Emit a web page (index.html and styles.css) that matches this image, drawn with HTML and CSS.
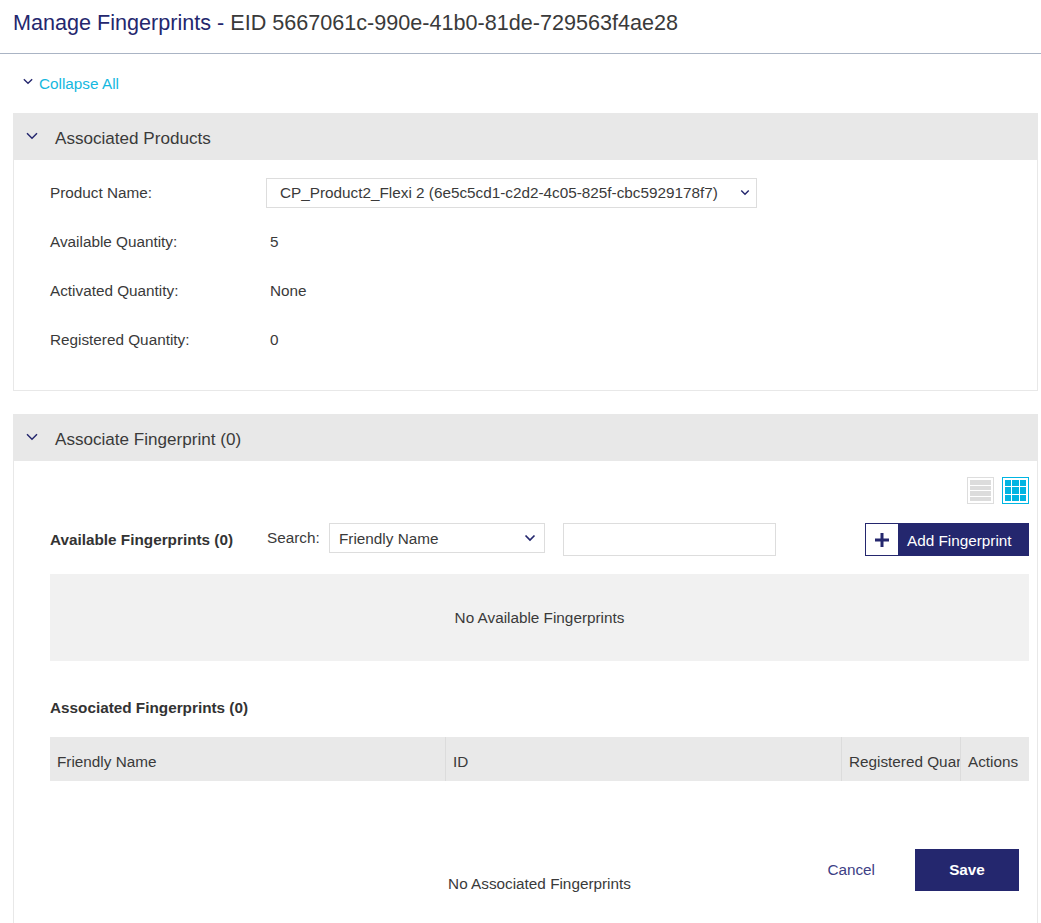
FILE: index.html
```html
<!DOCTYPE html>
<html lang="en">
<head>
<meta charset="utf-8">
<title>Manage Fingerprints</title>
<link rel="stylesheet" href="styles.css">
</head>
<body>
<header class="page-header">
  <h1 class="page-title"><span class="title-accent">Manage Fingerprints -</span> EID 5667061c-990e-41b0-81de-729563f4ae28</h1>
</header>
<main class="content">
  <div class="collapse-all">
    <svg class="chevron" viewBox="0 0 12 8" width="12" height="8"><path d="M1 1.2 6 6.2 11 1.2" fill="none" stroke="#24276e" stroke-width="1.6"/></svg>
    <a class="collapse-link" href="#">Collapse All</a>
  </div>

  <section class="panel panel-products">
    <div class="panel-head">
      <svg class="chevron" viewBox="0 0 12 8" width="12" height="8"><path d="M1 1.2 6 6.2 11 1.2" fill="none" stroke="#24276e" stroke-width="1.5"/></svg>
      <h2 class="panel-title">Associated Products</h2>
    </div>
    <div class="product-grid">
      <div class="product-label">Product Name:</div>
      <div class="product-value">
        <select class="select select-product"><option>CP_Product2_Flexi 2 (6e5c5cd1-c2d2-4c05-825f-cbc5929178f7)</option></select>
      </div>
      <div class="product-label">Available Quantity:</div>
      <div class="product-value product-text">5</div>
      <div class="product-label">Activated Quantity:</div>
      <div class="product-value product-text">None</div>
      <div class="product-label">Registered Quantity:</div>
      <div class="product-value product-text">0</div>
    </div>
  </section>

  <section class="panel panel-fingerprints">
    <div class="panel-head">
      <svg class="chevron" viewBox="0 0 12 8" width="12" height="8"><path d="M1 1.2 6 6.2 11 1.2" fill="none" stroke="#24276e" stroke-width="1.5"/></svg>
      <h2 class="panel-title">Associate Fingerprint (0)</h2>
    </div>
    <div class="panel-body">
      <div class="view-toggle">
        <span class="view-icon view-list"><i></i><i></i><i></i><i></i></span>
        <span class="view-icon view-grid"><i></i><i></i><i></i><i></i><i></i><i></i><i></i><i></i><i></i></span>
      </div>
      <div class="search-row">
        <h3 class="sub-title sub-available">Available Fingerprints (0)</h3>
        <label class="search-label">Search:</label>
        <select class="select select-search"><option>Friendly Name</option></select>
        <input class="search-input" type="text">
        <button class="add-button" type="button">
          <span class="add-icon"><svg viewBox="0 0 16 16" width="16" height="16"><path d="M8 1v14M1 8h14" stroke="#24276e" stroke-width="3"/></svg></span>
          <span class="add-text">Add Fingerprint</span>
        </button>
      </div>
      <div class="empty-box">No Available Fingerprints</div>
      <h3 class="sub-title sub-associated">Associated Fingerprints (0)</h3>
      <div class="table-head">
        <div class="th">Friendly Name</div>
        <div class="th">ID</div>
        <div class="th">Registered Quantity</div>
        <div class="th">Actions</div>
      </div>
      <div class="table-empty">No Associated Fingerprints</div>
    </div>
  </section>
</main>
<footer class="action-bar">
  <a class="cancel-link" href="#">Cancel</a>
  <button class="save-button" type="button">Save</button>
</footer>
</body>
</html>
```
FILE: styles.css
```css
* { box-sizing: border-box; }
html, body { height: 923px; overflow: hidden; }
body {
  margin: 0;
  background: #fff;
  color: #3a3a3a;
  font-family: "Liberation Sans", Arial, sans-serif;
  font-size: 15.3px;
  position: relative;
}
.page-header {
  height: 54px;
  border-bottom: 1px solid #aab4c4;
  padding: 10px 13px 0;
}
.page-title {
  margin: 0;
  font-size: 21.6px;
  line-height: 25px;
  font-weight: 400;
  color: #3a3a3a;
  white-space: nowrap;
}
.title-accent { color: #24276e; }
.content { padding: 0 3px 0 13px; }
.collapse-all {
  display: flex;
  align-items: center;
  height: 59px;
  padding: 0 0 0 10px;
}
.collapse-all .chevron { width: 10px; height: 7px; margin: -4px 6px 0 0; }
.collapse-link { color: #14b8e0; text-decoration: none; padding-top: 1px; }
.panel { border: 1px solid #e8e8e8; border-top: 0; }
.panel-products { height: 278px; margin-bottom: 23px; }
.panel-fingerprints { border-bottom: 0; height: 520px; }
.panel-head {
  display: flex;
  align-items: center;
  height: 47px;
  background: #e8e8e8;
  margin: 0 -1px;
  padding-left: 13px;
}
.panel-head .chevron { margin-right: 17px; margin-top: -1px; }
.panel-title { margin: 0; font-size: 17.1px; line-height: 20px; padding-top: 4px; font-weight: 400; color: #3a3a3a; }
.product-grid {
  display: grid;
  grid-template-columns: 216px 1fr;
  grid-auto-rows: 49px;
  padding: 8px 0 0 36px;
}
.product-label { display: flex; align-items: center; height: 49px; padding-top: 1px; }
.product-value { display: flex; align-items: center; }
.product-text { padding-left: 4px; }
.select {
  appearance: none;
  -webkit-appearance: none;
  height: 30px;
  border: 1px solid #ddd;
  background-color: #fff;
  background-repeat: no-repeat;
  background-image: url("data:image/svg+xml,%3Csvg xmlns='http://www.w3.org/2000/svg' width='12' height='8' viewBox='0 0 12 8'%3E%3Cpath d='M1.5 1.5 6 6 10.500 1.500' fill='none' stroke='%2324276e' stroke-width='1.700'/%3E%3C/svg%3E");
  color: #3a3a3a;
  font-family: "Liberation Sans", Arial, sans-serif;
  font-size: 15.3px;
  border-radius: 0;
}
.select-product { width: 491px; padding-left: 13px; background-position: 473px 10px; background-size: 10px 7px; }
.panel-body { padding: 16px 8px 0 36px; }
.view-toggle { display: flex; justify-content: flex-end; gap: 8px; height: 28px; }
.view-icon {
  width: 27px;
  height: 27px;
  padding: 2px;
  display: grid;
  gap: 1px;
  background: #fff;
}
.view-list { border: 1px solid #ddd; grid-template-rows: repeat(4, 1fr); }
.view-list i { background: #dcdcdc; }
.view-grid { border: 1px solid #00b5e2; grid-template-columns: repeat(3, 1fr); grid-template-rows: repeat(3, 1fr); }
.view-grid i { background: #00b5e2; }
.search-row { display: flex; align-items: flex-start; height: 51px; margin-top: 18px; }
.sub-title { margin: 0; font-size: 15.3px; font-weight: 700; color: #333; }
.sub-available { width: 217px; padding-top: 8px; white-space: nowrap; }
.search-label { width: 62px; padding-top: 6px; }
.select-search { width: 216px; padding-left: 9px; background-position: 194px 10px; }
.search-input { width: 213px; height: 33px; margin-left: 18px; border: 1px solid #ddd; background: #fff; }
.add-button {
  display: flex;
  align-items: stretch;
  width: 164px;
  height: 33px;
  margin-left: auto;
  padding: 0;
  border: 1px solid #24276e;
  background: #24276e;
  color: #fff;
  font-family: "Liberation Sans", Arial, sans-serif;
  font-size: 15.3px;
}
.add-icon {
  display: flex;
  align-items: center;
  justify-content: center;
  width: 32px;
  background: #fff;
}
.add-text { align-self: center; padding: 2px 0 0 9px; white-space: nowrap; }
.empty-box {
  display: flex;
  align-items: center;
  justify-content: center;
  height: 87px;
  background: #f1f1f1;
}
.sub-associated { margin-top: 38px; line-height: 18px; }
.table-head {
  display: grid;
  grid-template-columns: 396px 396px 119px 68px;
  height: 44px;
  margin-top: 20px;
  background: #e9e9e9;
}
.th {
  display: flex;
  align-items: center;
  padding: 5px 0 0 7px;
  overflow: hidden;
  white-space: nowrap;
  border-right: 1px solid #dcdcdc;
}
.th:last-child { border-right: 0; }
.table-empty { margin-top: 94px; text-align: center; line-height: 18px; }
.action-bar {
  position: absolute;
  right: 22px;
  top: 849px;
  display: flex;
  align-items: center;
  gap: 40px;
}
.cancel-link { color: #3d4085; text-decoration: none; }
.save-button {
  width: 104px;
  height: 42px;
  border: 0;
  background: #24276e;
  color: #fff;
  font-family: "Liberation Sans", Arial, sans-serif;
  font-size: 15.3px;
  font-weight: 700;
}
```
